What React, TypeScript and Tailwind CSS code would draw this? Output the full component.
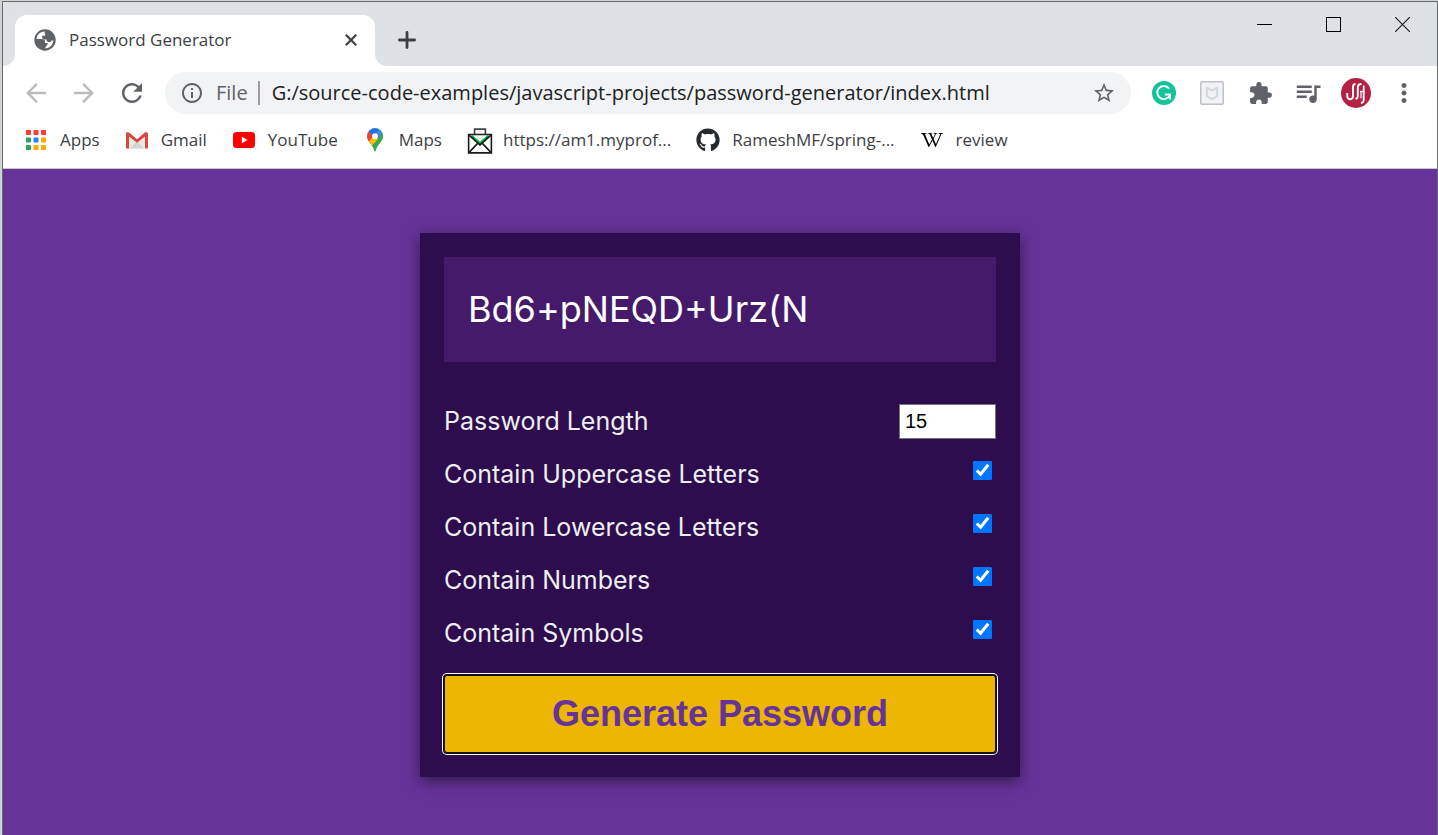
import { useState } from "react";
import type { ReactNode } from "react";
import { FaGithub, FaWikipediaW } from "react-icons/fa";
import {
  MdArrowBack,
  MdArrowForward,
  MdExtension,
  MdInfoOutline,
  MdMoreVert,
  MdQueueMusic,
  MdRefresh,
  MdStarBorder,
} from "react-icons/md";

const GlobeIcon = () => (
  <svg viewBox="0 0 22 22" className="size-[22px]" aria-hidden="true">
    <circle cx="11" cy="11" r="10.700" fill="#5f6368" />
    <path
      d="M10.300 2.500C6 2.700 3 5.700 2.600 10h5.200c2 0 3.200 1 3.200 2.600v1.300h1.700c1 0 1.300.7.800 1.500l-2.600 3.900c4.600.1 8.300-3.400 8.500-7.900h-1.900c-.5 1.300-1.700 1.900-3.200 1.600-1.300-.3-1.700-1.200-1.700-2.600h-1.900c-1.600 0-2.600-1-2.600-2.500V6.800h1.700c1.100 0 1.500-.5 1.500-1.600z"
      fill="#fff"
    />
  </svg>
);

const AppsIcon = () => (
  <svg viewBox="0 0 20 20" className="size-5" aria-hidden="true">
    <path fill="#f44336" d="M0 0h5v5H0zM7.500 0h5v5h-5zM15 0h5v5h-5z" />
    <path fill="#34a05a" d="M0 7.500h5v5H0zM0 15h5v5H0z" />
    <path fill="#1e88f5" d="M7.500 7.500h5v5h-5z" />
    <path fill="#fbab00" d="M15 7.500h5v5h-5zM7.500 15h5v5h-5zM15 15h5v5h-5z" />
  </svg>
);

const GmailIcon = () => (
  <svg viewBox="0 0 22 17" className="h-[17px] w-[22px]" aria-hidden="true">
    <path fill="#e8e8e8" d="M2 1h18v15.500H2z" />
    <path fill="#d4d4d4" d="M4 16.500 11 9l7 7.500z" />
    <path fill="#fafafa" d="M3 .5h16l-8 7z" />
    <path fill="#d9483b" d="M0 2C0 .8.7.3 1.800.3L3 .6l8 6.600 8-6.600L20.200.3C21.300.3 22 .8 22 2v13.500c0 .7-.4 1-1 1h-2V4.600l-8 6.200-8-6.200v11.900H1c-.6 0-1-.3-1-1z" />
  </svg>
);

const YouTubeIcon = () => (
  <svg viewBox="0 0 22 16" className="h-4 w-[22px]" aria-hidden="true">
    <rect width="22" height="16" rx="3.500" fill="#f00" />
    <path d="M8.800 4.700 14.500 8l-5.700 3.300z" fill="#fff" />
  </svg>
);

const MapsIcon = () => (
  <svg viewBox="0 0 16 24" className="h-6 w-4" aria-hidden="true">
    <clipPath id="pin">
      <path d="M8 .3a7.900 7.900 0 0 1 7.900 7.900c0 3-1.400 4.700-3.300 7.200-1.700 2.200-3 4-3.600 6.600-.2.900-.4 1.500-1 1.500s-.8-.6-1-1.500c-.6-2.600-1.900-4.400-3.600-6.600C1.500 12.900.1 11.200.1 8.200A7.900 7.900 0 0 1 8 .3z" />
    </clipPath>
    <g clipPath="url(#pin)">
      <path fill="#34a853" d="M0 0h16v24H0z" />
      <path fill="#fbbc04" d="M0 14.500 12.300 1 8 8.200l3.600 2.200L4 18.500z" />
      <path fill="#ea4335" d="M0 2h3.500L8 6.500 1.400 14 0 13z" />
      <path fill="#1a73e8" d="M1.500 3.500 5 0h8v1L7 8z" />
      <path fill="#4285f4" d="m8 8 5.500-6.500L10.500 0 16 4v2l-5.500 5z" />
      <path fill="#4285f4" d="m8 8 4-5.500L16 0v5.500L13.500 4z" />
      <path fill="#34a853" d="m10.500 10.600 4.500-6 1 .4v8z" />
    </g>
    <circle cx="8" cy="8.200" r="2.900" fill="#fff" />
  </svg>
);

const MailboxIcon = () => (
  <svg viewBox="0 0 24 24" className="size-[26px]" fill="none" stroke="#1c1c1c" strokeWidth="1.500" aria-hidden="true">
    <path d="M7 5.500V1h10v4.500" stroke="#444" />
    <path d="M1.500 6h21v17h-21z" />
    <path d="m4 7.500 8 7 8-7" stroke="#12b955" strokeWidth="3" />
    <path d="m2 6.500 10 9 10-9M2 22.500l8-8.500M22 22.500 14 14" />
  </svg>
);

const GrammarlyIcon = () => (
  <svg viewBox="0 0 24 24" className="size-6" fill="none" aria-hidden="true">
    <circle cx="12" cy="12" r="12" fill="#15c39a" />
    <path d="M16.600 7.200A6.500 6.500 0 1 0 17.800 14" stroke="#fff" strokeWidth="1.900" strokeLinecap="round" />
    <path d="M13.600 13.500h4.500v4.300" stroke="#fff" strokeWidth="1.900" strokeLinecap="round" />
  </svg>
);

const ShieldIcon = () => (
  <svg viewBox="0 0 24 24" className="size-6" fill="none" aria-hidden="true">
    <rect x=".75" y=".75" width="22.500" height="22.500" rx="1.500" fill="#f1f3f4" stroke="#bcc1c6" strokeWidth="1.500" />
    <path d="m7 7 5 2.400L17 7v8.500l-5 2.500-5-2.500z" stroke="#d3d9de" strokeWidth="2.200" />
  </svg>
);

const ProfileIcon = () => (
  <svg viewBox="0 0 30 30" className="size-[30px]" fill="none" aria-hidden="true">
    <circle cx="15" cy="15" r="15" fill="#b52045" />
    <g stroke="#fff">
      <path d="M6.300 15v3.500c0 3.700 5.700 3.700 5.700-.5V9c0-2 .6-3 2.500-3" strokeWidth="1.900" />
      <path d="M20.500 6c-2.700 0-3.700 1-3.700 3.500V18c0 1.800-.6 2.600-2.300 2.900" strokeWidth="1.900" />
      <path d="M19 13.500h4.300" strokeWidth="1.400" />
      <path d="M20 13.500v7" strokeWidth="1.200" />
      <path d="M22.700 7.500V22c0 1.900-.8 2.700-2.700 3" strokeWidth="1.800" />
    </g>
  </svg>
);

const bookmarks: { label: string; icon: ReactNode }[] = [
  { label: "Apps", icon: <AppsIcon /> },
  { label: "Gmail", icon: <GmailIcon /> },
  { label: "YouTube", icon: <YouTubeIcon /> },
  { label: "Maps", icon: <MapsIcon /> },
  { label: "https://am1.myprof...", icon: <MailboxIcon /> },
  { label: "RameshMF/spring-...", icon: <FaGithub className="size-6 text-[#24292e]" /> },
  { label: "review", icon: <FaWikipediaW className="size-[22px] text-black" /> },
];

const extensions: { label: string; icon: ReactNode }[] = [
  { label: "Grammarly", icon: <GrammarlyIcon /> },
  { label: "Site safety", icon: <ShieldIcon /> },
  { label: "Extensions", icon: <MdExtension className="size-[25px]" /> },
  { label: "Media", icon: <MdQueueMusic className="size-[30px]" /> },
  { label: "Profile", icon: <ProfileIcon /> },
  { label: "Menu", icon: <MdMoreVert className="size-[30px]" /> },
];

const options = [
  { id: "uppercase", label: "Contain Uppercase Letters" },
  { id: "lowercase", label: "Contain Lowercase Letters" },
  { id: "numbers", label: "Contain Numbers" },
  { id: "symbols", label: "Contain Symbols" },
];

function TitleBar() {
  return (
    <header className="flex h-16 justify-between bg-[#dee1e6]">
      <div className="flex items-end">
        <div className="h-[51px] w-3 bg-white">
          <div className="size-full rounded-br-xl bg-[#dee1e6]" />
        </div>
        <div className="flex h-[51px] w-[360px] items-center rounded-t-xl bg-white pr-3 pb-0.5 pl-[19px]">
          <GlobeIcon />
          <span className="ml-[13px] flex-1 text-[17px] text-[#3c4043]">Password Generator</span>
          <button aria-label="Close tab" className="grid size-6 place-items-center">
            <svg viewBox="0 0 12 12" className="size-3" stroke="#3c4043" strokeWidth="2.200" aria-hidden="true">
              <path d="m.8.8 10.400 10.400M11.200.8.8 11.200" />
            </svg>
          </button>
        </div>
        <div className="h-[51px] w-3 bg-white">
          <div className="size-full rounded-bl-xl bg-[#dee1e6]" />
        </div>
        <button aria-label="New tab" className="grid h-[51px] w-10 place-items-center pb-0.5">
          <svg viewBox="0 0 18 18" className="size-[18px]" stroke="#3c4043" strokeWidth="2.800" strokeLinecap="round" aria-hidden="true">
            <path d="M9 1.400v15.200M1.400 9h15.200" />
          </svg>
        </button>
      </div>
      <div className="flex h-[45px]">
        <button aria-label="Minimize" className="grid w-[69px] place-items-center">
          <span className="h-px w-[15px] bg-black" />
        </button>
        <button aria-label="Maximize" className="grid w-[69px] place-items-center">
          <span className="size-[15px] border border-black" />
        </button>
        <button aria-label="Close" className="grid w-[69px] place-items-center">
          <svg viewBox="0 0 15 15" className="size-[15px]" stroke="#222" strokeWidth="1.200" aria-hidden="true">
            <path d="m0 0 15 15M15 0 0 15" />
          </svg>
        </button>
      </div>
    </header>
  );
}

function Toolbar() {
  return (
    <div className="flex items-center px-[9px] pt-1.5 text-[#5f6368]">
      <button aria-label="Back" className="grid h-10 w-12 place-items-center text-[#babcbe]">
        <MdArrowBack className="size-[30px]" />
      </button>
      <button aria-label="Forward" className="grid h-10 w-12 place-items-center text-[#babcbe]">
        <MdArrowForward className="size-[30px]" />
      </button>
      <button aria-label="Reload" className="grid h-10 w-12 place-items-center">
        <MdRefresh className="size-[30px]" />
      </button>
      <div className="mx-[9px] flex h-[42px] flex-1 items-center rounded-full bg-[#f1f3f4] px-[15px]">
        <MdInfoOutline className="size-6" />
        <label htmlFor="address" className="ml-3 text-[20px]">File</label>
        <span className="mr-3 ml-2.5 h-6 w-0.5 bg-[#9aa0a6]" />
        <input
          id="address"
          defaultValue="G:/source-code-examples/javascript-projects/password-generator/index.html"
          className="min-w-0 flex-1 bg-transparent text-[20px] text-[#202124] outline-none"
        />
        <button aria-label="Bookmark this page">
          <MdStarBorder className="size-6" />
        </button>
      </div>
      {extensions.map(({ label, icon }) => (
        <button key={label} aria-label={label} className="grid h-10 w-12 place-items-center">
          {icon}
        </button>
      ))}
    </div>
  );
}

function BookmarksBar() {
  return (
    <nav className="flex h-[55px] items-center gap-[25px] border-b border-[#c8c8cc] px-[21px] pb-0.5">
      {bookmarks.map(({ label, icon }) => (
        <a key={label} href="#" className="flex items-center gap-3 text-[17px] whitespace-nowrap text-[#3c4043]">
          <span className="grid size-6 place-items-center">{icon}</span>
          {label}
        </a>
      ))}
    </nav>
  );
}

function makePassword(length: number, enabled: Record<string, boolean>) {
  const sets: Record<string, string> = {
    uppercase: "ABCDEFGHIJKLMNOPQRSTUVWXYZ",
    lowercase: "abcdefghijklmnopqrstuvwxyz",
    numbers: "0123456789",
    symbols: "!@#$%^&*()_+=",
  };
  const pool = options.filter(({ id }) => enabled[id]).map(({ id }) => sets[id]).join("");
  return Array.from({ length }, () => pool.charAt(Math.floor(Math.random() * pool.length))).join("");
}

function GeneratorCard() {
  const [password, setPassword] = useState("Bd6+pNEQD+Urz(N");
  const [length, setLength] = useState(15);
  const [enabled, setEnabled] = useState<Record<string, boolean>>({
    uppercase: true,
    lowercase: true,
    numbers: true,
    symbols: true,
  });

  return (
    <section className="w-full max-w-[600px] bg-[#2d0d4e] p-6 font-[Inter,sans-serif] shadow-[0_4px_14px_rgba(0,0,0,0.5)]">
      <output className="flex h-[105px] items-center overflow-hidden bg-[#451a6b] px-6 pb-0.5 text-[36px] text-white">
        {password}
      </output>
      <div className="mt-[41px] flex flex-col gap-4 text-[25px] text-[#eee]">
        <div className="flex h-[37px] items-center justify-between">
          <label htmlFor="length">Password Length</label>
          <input
            id="length"
            type="number"
            value={length}
            onChange={(e) => setLength(Number(e.target.value))}
            className="h-[35px] w-[97px] border border-[#767676] bg-white px-[5px] font-['Liberation_Sans',Arial,sans-serif] text-[20px] text-black"
          />
        </div>
        {options.map(({ id, label }) => (
          <div key={id} className="flex h-[37px] items-center justify-between">
            <label htmlFor={id}>{label}</label>
            <input
              id={id}
              type="checkbox"
              checked={enabled[id]}
              onChange={(e) => setEnabled({ ...enabled, [id]: e.target.checked })}
              className="mt-[5px] mr-1 size-[19px] self-start accent-[#0075ff]"
            />
          </div>
        ))}
      </div>
      <button
        onClick={() => setPassword(makePassword(length, enabled))}
        className="mt-[23px] h-[78px] w-full rounded-[3px] border border-[#101010] bg-[#ecb602] font-['Liberation_Sans',Arial,sans-serif] text-[36px] font-bold text-[#663399] shadow-[0_0_0_1px_#101010,0_0_0_2px_#fff]"
      >
        Generate Password
      </button>
    </section>
  );
}

export default function App() {
  return (
    <div className="min-h-screen bg-[#d0d3d3] pt-px pl-0.5 font-['Open_Sans','Noto_Sans',sans-serif]">
      <div className="flex min-h-[calc(100vh-1px)] flex-col border border-b-0 border-[#666b6b] bg-white">
        <TitleBar />
        <Toolbar />
        <BookmarksBar />
        <main className="flex flex-1 items-start justify-center bg-[#663399] py-16">
          <GeneratorCard />
        </main>
      </div>
    </div>
  );
}
